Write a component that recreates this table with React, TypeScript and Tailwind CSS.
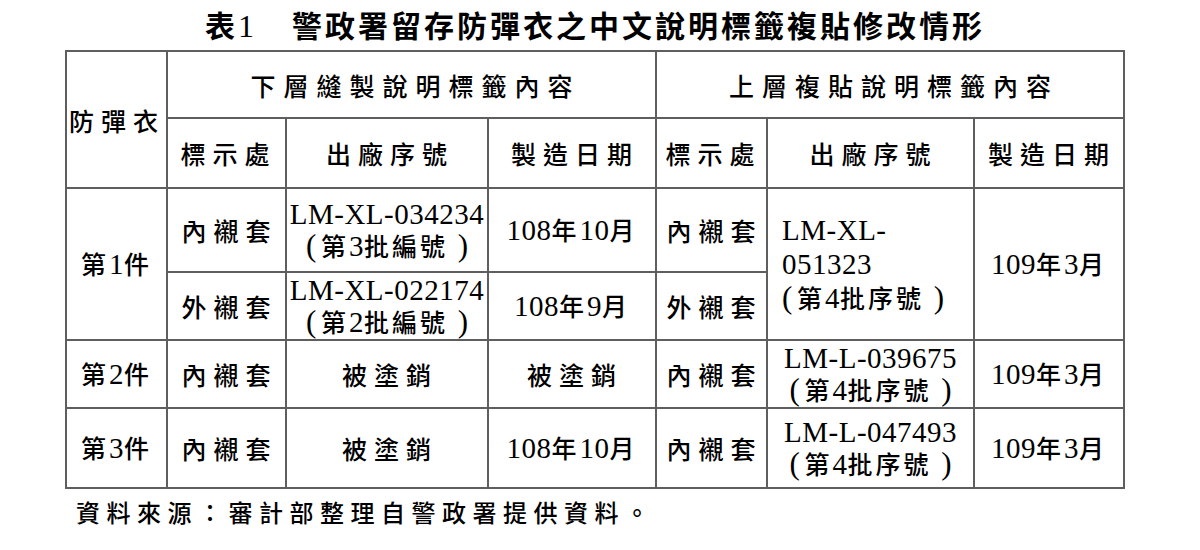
import React from "react";

function T({ s }: { s: string }) {
  const parts = s.split(/([A-Za-z0-9\-]+|\(|\))/);
  return (
    <>
      {parts.map((p, i) => {
        if (p === "(")
          return (
            <span key={i} className="inline-block w-[15px] text-left font-['Liberation_Serif',serif] font-normal text-[31px] tracking-normal">
              (
            </span>
          );
        if (p === ")")
          return (
            <span key={i} className="inline-block w-[20px] text-right font-['Liberation_Serif',serif] font-normal text-[31px] tracking-normal">
              )
            </span>
          );
        if (/[A-Za-z0-9]/.test(p))
          return (
            <span key={i} className="font-['Liberation_Serif',serif] font-normal text-[29px] tracking-[0.5px]">
              {p}
            </span>
          );
        return <React.Fragment key={i}>{p}</React.Fragment>;
      })}
    </>
  );
}

const cell =
  "border-2 border-[#5e5e5e] p-0 align-middle text-center font-['Noto_Sans_CJK_TC',sans-serif] font-medium";
const wide = "text-[25px] tracking-[7px] leading-[30px]";
const mixed = "text-[25px] tracking-[3px] leading-[31px]";

export default function App() {
  return (
    <div className="w-[1200px] h-[550px] bg-white text-black font-['Noto_Sans_CJK_TC',sans-serif] overflow-hidden">
      <div className="h-[50px] pt-[8px] pl-[205px]">
        <div className="text-[30px] leading-[32px] tracking-[3px] font-bold whitespace-nowrap">
          表<span className="font-['Liberation_Serif',serif] text-[32px] font-normal tracking-normal">1</span>
          <span className="ml-[38px]">警政署留存防彈衣之中文說明標籤複貼修改情形</span>
        </div>
      </div>
      <table className="ml-[65px] w-[1058px] table-fixed border-collapse">
        <colgroup>
          <col className="w-[101px]" />
          <col className="w-[119px]" />
          <col className="w-[202px]" />
          <col className="w-[168px]" />
          <col className="w-[111px]" />
          <col className="w-[207px]" />
          <col className="w-[150px]" />
        </colgroup>
        <tbody>
          <tr className="h-[67px]">
            <td rowSpan={2} className={`${cell} !text-left pl-[2px] ${wide}`}>
              防彈衣
            </td>
            <td colSpan={3} className={`${cell} text-[25px] tracking-[8px] leading-[30px] pl-[8px]`}>
              下層縫製說明標籤內容
            </td>
            <td colSpan={3} className={`${cell} text-[25px] tracking-[8px] leading-[30px] pl-[8px]`}>
              上層複貼說明標籤內容
            </td>
          </tr>
          <tr className="h-[70px]">
            <td className={`${cell} ${wide} pl-[4px]`}>標示處</td>
            <td className={`${cell} ${wide} pl-[6px]`}>出廠序號</td>
            <td className={`${cell} ${wide} pl-[6px]`}>製造日期</td>
            <td className={`${cell} ${wide} pl-[4px]`}>標示處</td>
            <td className={`${cell} ${wide} pl-[6px]`}>出廠序號</td>
            <td className={`${cell} ${wide} pl-[6px]`}>製造日期</td>
          </tr>
          <tr className="h-[84px]">
            <td rowSpan={2} className={`${cell} ${mixed}`}>
              <T s="第1件" />
            </td>
            <td className={`${cell} ${wide} pl-[6px]`}>內襯套</td>
            <td className={`${cell} ${mixed}`}>
              <T s="LM-XL-034234" />
              <br />
              <T s="(第3批編號)" />
            </td>
            <td className={`${cell} ${mixed}`}>
              <T s="108年10月" />
            </td>
            <td className={`${cell} ${wide} pl-[6px]`}>內襯套</td>
            <td rowSpan={2} className={`${cell} !text-left pl-[14px] text-[25px] tracking-[3px] leading-[33px]`}>
              <T s="LM-XL-" />
              <br />
              <T s="051323" />
              <br />
              <T s="(第4批序號)" />
            </td>
            <td rowSpan={2} className={`${cell} ${mixed}`}>
              <T s="109年3月" />
            </td>
          </tr>
          <tr className="h-[68px]">
            <td className={`${cell} ${wide} pl-[6px]`}>外襯套</td>
            <td className={`${cell} ${mixed}`}>
              <T s="LM-XL-022174" />
              <br />
              <T s="(第2批編號)" />
            </td>
            <td className={`${cell} ${mixed}`}>
              <T s="108年9月" />
            </td>
            <td className={`${cell} ${wide} pl-[6px]`}>外襯套</td>
          </tr>
          <tr className="h-[68px]">
            <td className={`${cell} ${mixed}`}>
              <T s="第2件" />
            </td>
            <td className={`${cell} ${wide} pl-[6px]`}>內襯套</td>
            <td className={`${cell} ${wide} pl-[6px]`}>被塗銷</td>
            <td className={`${cell} ${wide} pl-[6px]`}>被塗銷</td>
            <td className={`${cell} ${wide} pl-[6px]`}>內襯套</td>
            <td className={`${cell} ${mixed}`}>
              <T s="LM-L-039675" />
              <br />
              <T s="(第4批序號)" />
            </td>
            <td className={`${cell} ${mixed}`}>
              <T s="109年3月" />
            </td>
          </tr>
          <tr className="h-[80px]">
            <td className={`${cell} ${mixed}`}>
              <T s="第3件" />
            </td>
            <td className={`${cell} ${wide} pl-[6px]`}>內襯套</td>
            <td className={`${cell} ${wide} pl-[6px]`}>被塗銷</td>
            <td className={`${cell} ${mixed}`}>
              <T s="108年10月" />
            </td>
            <td className={`${cell} ${wide} pl-[6px]`}>內襯套</td>
            <td className={`${cell} ${mixed}`}>
              <T s="LM-L-047493" />
              <br />
              <T s="(第4批序號)" />
            </td>
            <td className={`${cell} ${mixed}`}>
              <T s="109年3月" />
            </td>
          </tr>
        </tbody>
      </table>
      <div className="pl-[76px] mt-[10px] text-[24px] leading-[26px] tracking-[6.5px] font-medium whitespace-nowrap">
        資料來源：審計部整理自警政署提供資料。
      </div>
    </div>
  );
}
